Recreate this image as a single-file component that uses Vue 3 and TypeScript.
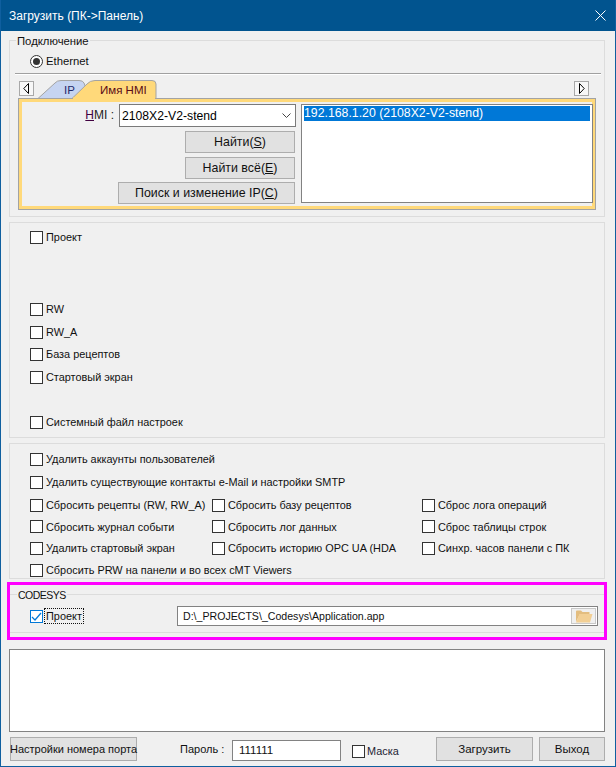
<template>
  <div class="window">
    <header class="titlebar">
      <span class="title">Загрузить (ПК-&gt;Панель)</span>
      <svg class="close" width="11" height="11" viewBox="0 0 11 11">
        <path d="M.5.5l10 10M10.5.5l-10 10" stroke="#fff" stroke-width="1" fill="none" />
      </svg>
    </header>

    <main class="content">
      <section class="group group_connect">
        <span class="legend">Подключение</span>
        <label class="radio-row">
          <span class="radio"><span class="radio_dot"></span></span>
          <span>Ethernet</span>
        </label>
        <div class="separator"></div>

        <div class="tab-strip">
          <button class="arrow">
            <svg width="7" height="11" viewBox="0 0 7 11">
              <path d="M5.5.5v10L.8 5.500z" fill="#fff" stroke="#000" />
            </svg>
          </button>
          <svg class="tabs" width="122" height="19" viewBox="0 0 122 19">
            <path d="M1 18.500L18 3Q20 .5 24 .5H42Q46 .5 47 3L49 8L36 18.500z" fill="#c6d4f1" stroke="#a3a3a3" />
            <path d="M35 18.500L50 4Q53 .5 58 .5H115Q119 .5 119 4V18.500z" fill="#ffd97a" stroke="#a3a3a3" />
            <path d="M36 18.500H118" stroke="#ffd97a" stroke-width="2" />
            <text x="27" y="14" class="tab-text tab-text_ip">IP</text>
            <text x="63" y="14" class="tab-text tab-text_active">Имя HMI</text>
          </svg>
          <button class="arrow arrow_right">
            <svg width="7" height="11" viewBox="0 0 7 11">
              <path d="M1.500.5v10L6.200 5.500z" fill="#fff" stroke="#000" />
            </svg>
          </button>
        </div>

        <div class="tab-panel">
          <div class="hmi-form">
            <div class="hmi-row">
              <span class="hmi-label"><u>H</u>MI :</span>
              <div class="combo">
                <span>2108X2-V2-stend</span>
                <svg width="9" height="5" viewBox="0 0 9 5">
                  <path d="M.5.5l4 4 4-4" fill="none" stroke="#444" />
                </svg>
              </div>
            </div>
            <button class="btn btn_find">Найти(<u>S</u>)</button>
            <button class="btn btn_find">Найти всё(<u>E</u>)</button>
            <button class="btn btn_search">Поиск и изменение IP(<u>C</u>)</button>
          </div>
          <div class="hmi-list">
            <div class="hmi-list_item">192.168.1.20 (2108X2-V2-stend)</div>
          </div>
        </div>
      </section>

      <section class="group group_files">
        <label
          v-for="item in fileOptions"
          :key="item.label"
          class="check-row"
          :style="{ marginTop: item.gap + 'px' }"
        >
          <span class="checkbox"></span>
          <span>{{ item.label }}</span>
        </label>
      </section>

      <section class="group group_reset">
        <label
          v-for="item in resetOptions"
          :key="item.label"
          :class="['check-cell', item.wide && 'check-cell_wide']"
          :style="{ height: item.height + 'px' }"
        >
          <span class="checkbox"></span>
          <span class="check-cell_text">{{ item.label }}</span>
        </label>
      </section>

      <div class="highlight">
        <section class="codesys">
          <span class="legend legend_codesys">CODESYS</span>
          <label class="codesys_check">
            <span class="checkbox checkbox_on">
              <svg width="11" height="11" viewBox="0 0 11 11">
                <path d="M1 6l3 3 6-7" fill="none" stroke="#0078d7" stroke-width="1.2" />
              </svg>
            </span>
            <span class="focus-label">Проект</span>
          </label>
          <div class="path-field">
            <span class="path-field_text">D:\_PROJECTS\_Codesys\Application.app</span>
            <button class="folder-btn">
              <svg width="18" height="14" viewBox="0 0 18 14">
                <path d="M1 13V2.500Q1 1.500 2 1.500H6L7.500 3H14.500V5H5L1 13z" fill="#e3bd7f" />
                <path d="M1 13.500L4.500 5H17.500L15 13.500z" fill="#f2cf94" />
              </svg>
            </button>
          </div>
        </section>
      </div>

      <div class="log-box"></div>

      <footer class="footer">
        <button class="btn btn_port"><span>Настройки номера порта</span></button>
        <span class="password-label">Пароль :</span>
        <div class="password-input">111111</div>
        <label class="mask">
          <span class="checkbox"></span>
          <span>Маска</span>
        </label>
        <button class="btn btn_upload">Загрузить</button>
        <button class="btn btn_exit">Выход</button>
      </footer>
    </main>
  </div>
</template>

<script setup lang="ts">
const fileOptions = [
  { label: "Проект", gap: 7 },
  { label: "RW", gap: 58 },
  { label: "RW_A", gap: 9 },
  { label: "База рецептов", gap: 8 },
  { label: "Стартовый экран", gap: 9 },
  { label: "Системный файл настроек", gap: 31 },
];

const resetOptions = [
  { label: "Удалить аккаунты пользователей", wide: true, height: 22 },
  { label: "Удалить существующие контакты e-Mail и настройки SMTP", wide: true, height: 24 },
  { label: "Сбросить рецепты (RW, RW_A)", height: 22 },
  { label: "Сбросить базу рецептов", height: 22 },
  { label: "Сброс лога операций", height: 22 },
  { label: "Сбросить журнал событи", height: 21 },
  { label: "Сбросить лог данных", height: 21 },
  { label: "Сброс таблицы строк", height: 21 },
  { label: "Удалить стартовый экран", height: 22 },
  { label: "Сбросить историю OPC UA (HDA", height: 22 },
  { label: "Синхр. часов панели с ПК", height: 22 },
  { label: "Сбросить PRW на панели и во всех cMT Viewers", wide: true, height: 22 },
];
</script>

<style>
html,
body {
  margin: 0;
  background: #f0f0f0;
}
</style>

<style scoped>
.window {
  width: 616px;
  height: 767px;
  box-sizing: border-box;
  border: 1px solid #0f5f9f;
  border-top: 0;
  background: #f0f0f0;
  color: #111;
  font-family: "Liberation Sans", Arial, sans-serif;
  font-size: 10.9px;
  overflow: hidden;
}
.titlebar {
  height: 31px;
  margin: 0 -1px;
  padding: 0 10px 0 9px;
  display: flex;
  align-items: center;
  justify-content: space-between;
  background: #01548f;
  color: #fff;
  font-size: 12px;
}
.content {
  padding: 9px 10px 0 8px;
}
.group {
  position: relative;
  border: 1px solid #dcdcdc;
  box-sizing: border-box;
}
.legend {
  position: absolute;
  top: -7px;
  left: 6px;
  padding: 0 1px;
  line-height: 14px;
  background: #f0f0f0;
  font-size: 11.3px;
}

/* connection */
.group_connect {
  height: 177px;
}
.radio-row {
  display: flex;
  align-items: center;
  gap: 3px;
  height: 14px;
  margin: 13px 0 0 20px;
  font-size: 11.3px;
}
.radio {
  width: 11px;
  height: 11px;
  border: 1px solid #333;
  border-radius: 50%;
  display: flex;
  align-items: center;
  justify-content: center;
  background: #fff;
}
.radio_dot {
  width: 7px;
  height: 7px;
  border-radius: 50%;
  background: #333;
}
.separator {
  height: 1px;
  margin: 5px 3px 0 5px;
  background: #a0a0a0;
  border-bottom: 1px solid #fff;
}
.tab-strip {
  display: flex;
  align-items: flex-start;
  height: 18px;
  margin: 5px 15px 0 9px;
}
.arrow {
  width: 15px;
  height: 15px;
  padding: 0;
  margin-top: 1px;
  border: 1px solid #a8a8a8;
  background: #f7f7f7;
  display: flex;
  align-items: center;
  justify-content: center;
}
.arrow_right {
  margin-left: auto;
}
.tabs {
  margin-left: 3px;
  flex: none;
}
.tab-text {
  font-family: "Liberation Sans", Arial, sans-serif;
  font-size: 11.5px;
}
.tab-text_ip {
  fill: #1d2a6b;
}
.tab-text_active {
  fill: #5a0a16;
}
.tab-panel {
  display: flex;
  box-sizing: border-box;
  width: 578px;
  height: 112px;
  margin-left: 8px;
  padding: 3px 2px 4px 97px;
  border: 1px solid #a3a3a3;
  box-shadow: inset 0 0 0 3px #ffd97a;
  gap: 5px;
}
.hmi-form {
  width: 178px;
  margin-left: 2px;
  flex: none;
  display: flex;
  flex-direction: column;
  align-items: flex-end;
}
.hmi-row {
  position: relative;
  height: 23px;
  margin-top: 2px;
  margin-bottom: 4px;
}
.hmi-label {
  position: absolute;
  right: 182px;
  top: 4px;
  white-space: nowrap;
  font-size: 12px;
  color: #222;
}
.hmi-label u {
  color: #400040;
}
.combo {
  width: 177px;
  height: 23px;
  box-sizing: border-box;
  padding: 0 4px 0 2px;
  border: 1px solid #7a7a7a;
  background: #fff;
  display: flex;
  align-items: center;
  justify-content: space-between;
  font-size: 12.2px;
  color: #000;
}
.btn {
  padding: 0;
  border: 1px solid #adadad;
  background: #e1e1e1;
  font: inherit;
  color: #111;
  font-size: 12.4px;
}
.btn_find {
  width: 110px;
  height: 22px;
  margin: 0 1px 4px 0;
}
.btn_search {
  width: 177px;
  height: 22px;
  margin: -1px 1px 0 0;
}
.hmi-list {
  flex: 1;
  margin-top: 2px;
  height: 99px;
  box-sizing: border-box;
  padding: 1px 2px;
  border: 1px solid #828282;
  background: #fff;
}
.hmi-list_item {
  height: 15px;
  line-height: 15px;
  background: #0078d7;
  color: #fff;
  font-size: 12.3px;
}

/* checkboxes */
.group_files {
  height: 216px;
  margin-top: 5px;
}
.check-row {
  display: flex;
  align-items: center;
  gap: 3px;
  height: 14px;
  margin-left: 20px;
}
.checkbox {
  width: 11px;
  height: 11px;
  flex: none;
  border: 1px solid #333;
  background: #fff;
  display: flex;
  align-items: center;
  justify-content: center;
}
.group_reset {
  height: 136px;
  margin-top: 5px;
  padding: 4px 0 0 20px;
  display: grid;
  grid-template-columns: 182px 210px 1fr;
  align-content: start;
}
.check-cell {
  display: flex;
  align-items: center;
  gap: 3px;
  white-space: nowrap;
  min-width: 0;
}
.check-cell_wide {
  grid-column: 1 / -1;
}

/* codesys highlight */
.highlight {
  box-sizing: border-box;
  width: 600px;
  height: 58px;
  margin: 3px 0 0 -2px;
  border: 3px solid #ff00ff;
  padding-top: 9px;
}
.codesys {
  position: relative;
  height: 39px;
  border-top: 1px solid #dcdcdc;
  border-bottom: 1px solid #dcdcdc;
  display: flex;
  align-items: flex-start;
  padding-top: 11px;
  box-sizing: border-box;
}
.legend_codesys {
  left: 7px;
  font-size: 10.5px;
  letter-spacing: -0.5px;
}
.codesys_check {
  width: 54px;
  flex: none;
  display: flex;
  align-items: center;
  gap: 2px;
  margin: 3px 0 0 20px;
}
.checkbox_on {
  border-color: #0078d7;
}
.focus-label {
  outline: 1px dotted #111;
  outline-offset: 0;
  padding: 0 1px;
  line-height: 14px;
}
.path-field {
  box-sizing: border-box;
  width: 421px;
  height: 20px;
  margin-left: 93px;
  padding: 1px 1px 1px 5px;
  border: 1px solid #828282;
  background: #fff;
  display: flex;
  align-items: center;
  justify-content: space-between;
  font-size: 10.6px;
}
.path-field_text {
  color: #111;
}
.folder-btn {
  width: 25px;
  height: 16px;
  padding: 0;
  border: 1px solid #c8c8c8;
  background: #f0f0f0;
  display: flex;
  align-items: center;
  justify-content: center;
}
.log-box {
  height: 83px;
  box-sizing: border-box;
  margin-top: 9px;
  border: 1px solid #828282;
  background: #fff;
}

/* footer */
.footer {
  display: flex;
  align-items: flex-start;
  height: 24px;
  margin-top: 5px;
}
.btn_port {
  width: 127px;
  height: 24px;
  margin-left: 1px;
  display: flex;
  justify-content: center;
  align-items: center;
  white-space: nowrap;
  font-size: 11px;
}
.password-label {
  width: 44px;
  flex: none;
  margin: 5px 0 0 43px;
  line-height: 14px;
  font-size: 11px;
  white-space: nowrap;
}
.password-input {
  box-sizing: border-box;
  width: 109px;
  height: 21px;
  margin: 3px 0 0 8px;
  padding-left: 6px;
  line-height: 19px;
  border: 1px solid #828282;
  background: #fff;
  font-size: 11.5px;
}
.mask {
  display: flex;
  align-items: center;
  gap: 2px;
  height: 14px;
  margin: 7px 0 0 11px;
  color: #223;
}
.btn_upload {
  width: 97px;
  height: 24px;
  margin-left: auto;
  font-size: 11.5px;
}
.btn_exit {
  width: 66px;
  height: 24px;
  margin-left: 6px;
  font-size: 11.5px;
}
</style>
